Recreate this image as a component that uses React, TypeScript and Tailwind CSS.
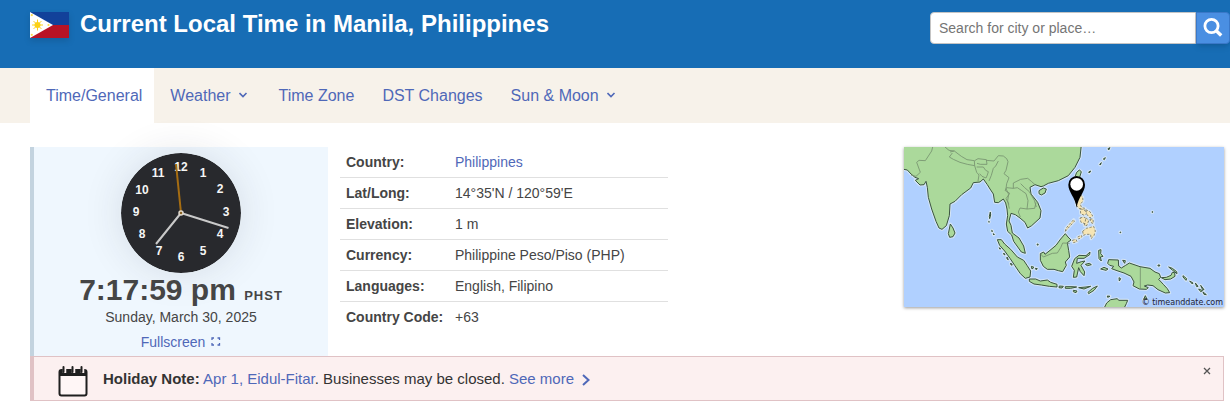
import { ReactNode } from "react";

const tabs = [
    { label: "Time/General", active: true },
    { label: "Weather", menu: true },
    { label: "Time Zone" },
    { label: "DST Changes" },
    { label: "Sun & Moon", menu: true },
];

const facts: { label: string; value: ReactNode }[] = [
    {
        label: "Country:",
        value: (
            <a href="#" className="text-[#4f68b8]">
                Philippines
            </a>
        ),
    },
    { label: "Lat/Long:", value: "14°35'N / 120°59'E" },
    { label: "Elevation:", value: "1 m" },
    { label: "Currency:", value: "Philippine Peso/Piso (PHP)" },
    { label: "Languages:", value: "English, Filipino" },
    { label: "Country Code:", value: "+63" },
];

const numerals = [
    { n: 12, x: 60, y: 18 },
    { n: 1, x: 82, y: 24 },
    { n: 2, x: 99, y: 40 },
    { n: 3, x: 105, y: 63 },
    { n: 4, x: 99, y: 85 },
    { n: 5, x: 82, y: 102 },
    { n: 6, x: 60, y: 108 },
    { n: 7, x: 38, y: 102 },
    { n: 8, x: 21, y: 85 },
    { n: 9, x: 15, y: 63 },
    { n: 10, x: 21, y: 41 },
    { n: 11, x: 37, y: 24 },
];

// Map outlines, drawn on a 960x480 canvas
const land = [
    // mainland Asia
    "M-6 66 10 69 21 81 33 91 44 95 34 100 48 114 60 113 66 103 70 121 73 151 83 186 96 223 105 243 114 247 127 236 136 206 138 171 153 163 173 143 200 123 208 107 228 105 238 96 250 113 258 126 268 141 272 166 283 167 298 156 305 168 309 186 311 206 307 231 311 253 323 264 329 283 352 315 364 319 359 297 345 273 325 258 321 235 315 222 321 199 334 203 348 213 363 226 371 243 383 236 408 213 411 191 401 166 381 141 378 121 393 113 411 119 418 117 433 109 463 101 493 86 513 61 528 31 532 -6 -6 -6Z",
    // Hainan, Taiwan, Sri Lanka
    "M405 131 418 123 427 126 423 138 412 144 405 140Z",
    "M526 69 532 74 527 91 520 101 512 92 518 76Z",
    "M139 231 147 243 153 258 147 269 137 271 133 260Z",
    // Sumatra
    "M280 278 292 278 302 291 320 307 340 330 359 340 369 355 380 372 378 390 364 394 349 380 332 355 318 334 302 312 287 295Z",
    // Java
    "M376 396 395 396 409 402 430 399 440 406 459 412 459 420 436 418 412 414 390 411 376 403Z",
    // Borneo
    "M409 320 419 315 423 322 438 310 456 295 470 276 484 260 492 270 501 279 490 287 494 310 497 330 484 345 487 355 476 374 463 371 450 367 430 367 418 358 409 340Z",
    // Sulawesi
    "M512 335 525 325 546 326 558 315 557 323 540 334 520 334 518 349 532 344 543 342 531 355 542 375 540 386 529 374 524 362 518 390 508 391 511 370 503 358Z",
    // Halmahera, Seram, Timor
    "M584 310 591 308 590 320 597 328 589 330 592 342 585 335Z",
    "M590 366 600 361 612 366 606 370Z",
    "M552 436 566 424 580 417 570 430 554 440Z",
    "M508 430 519 432 516 437 508 434Z",
    "M466 417 478 418 474 423 465 422Z",
    "M484 419 504 419 518 420 500 424 484 424Z",
    "M524 422 546 420 560 418 540 426Z",
    "M544 352 556 349 562 353 550 356Z",
    // New Guinea
    "M614 338 643 339 644 357 652 363 665 355 676 348 708 359 738 364 753 375 766 380 770 391 764 397 778 412 790 425 797 437 784 438 762 428 747 416 731 414 721 417 733 422 727 427 706 426 687 416 690 405 681 388 660 378 639 371 623 365 629 358 617 355 611 349Z",
    // Bismarck islands
    "M772 392 787 391 801 385 805 376 812 377 813 388 800 396 783 398Z",
    "M794 360 805 364 818 374 819 380 806 370Z",
    "M837 386 848 395 846 400 837 390Z",
    "M857 402 867 408 865 411Z",
    "M874 408 882 418 878 419Z",
    "M884 426 896 431 890 434Z",
    "M890 415 900 428 896 428Z",
    "M897 435 907 443 900 442Z",
    // Northern Australia
    "M600 484 608 468 620 458 640 455 644 460 671 460 667 470 660 484Z",
    "M719 457 724 446 729 457Z",
    // small islands
    "M259 195 260 204 257 215 256 208Z",
    "M254 223 256 224 255 226Z",
    "M263 250 266 252 264 254Z",
    "M268 260 271 262 269 264Z",
    "M286 302 290 306 287 306Z",
    "M299 318 303 323 300 323Z",
    "M309 330 313 338 309 336Z",
    "M320 348 325 354 321 354Z",
    "M399 291 403 292 401 295Z",
    "M382 358 390 361 384 366Z",
    "M394 364 400 365 396 368Z",
    "M598 36 604 32 601 38Z",
    "M587 52 592 47 589 54Z",
    "M612 5 618 2 614 9Z",
    "M554 75 560 72 556 78Z",
    "M744 194 746 194 746 196 744 196Z",
    "M648 255 650 255 650 257 648 257Z",
    "M762 354 767 354 767 357 762 357Z",
    "M656 340 664 341 662 349Z",
    "M645 392 650 395 646 402Z",
    "M610 447 618 448 611 451Z",
];

const philippines = [
    "M529 143 536 151 537 162 529 172 533 182 543 184 541 190 524 184 517 174 516 160 521 150Z",
    "M529 185 542 190 549 198 541 205 530 200Z",
    "M545 188 558 194 566 207 558 213 549 203Z",
    "M528 213 540 210 548 217 543 230 531 226Z",
    "M546 212 554 221 549 235 541 236Z",
    "M558 216 567 216 568 230 560 226Z",
    "M536 253 547 244 560 241 569 238 574 252 570 266 561 275 560 262 546 262 538 265Z",
    "M484 253 500 235 512 222 509 218 498 230 486 244Z",
    "M505 280 516 277 519 284 508 287Z",
    "M521 270 532 265 534 270 524 276Z",
];

const borders = [
    "M86 0 83 12 64 41 45 40 38 46 49 76 36 88 21 84",
    "M138 15 151 12 172 28 189 38 211 41 212 56 190 52 168 46 148 37 136 30 145 18",
    "M123 0 135 10 151 12M212 41 222 35 247 38 249 52 229 52 219 49",
    "M212 56 218 76 225 84 222 102M218 60 238 60 245 70 253 74 250 84 246 93 234 88 227 80",
    "M247 40 270 42 283 26 298 27 308 35 312 44 306 70 300 80 315 92M283 42 275 57 268 64 262 85 255 102M315 92 308 110 306 125 314 142 311 161 316 185",
    "M328 124 308 122 303 130 317 139 306 155 315 172",
    "M328 124 328 108 342 101 350 97 371 94 382 103 393 113M350 110 362 122 376 134 391 160 397 180",
    "M328 124 340 122 352 130 366 140 372 161 369 186M369 186 348 183 343 195 349 210M369 186 392 184 396 166",
    "M410 321 418 330 445 319 460 318 470 302 476 288 497 289",
    "M709 360 709 426",
];

function Flag() {
    return (
        <svg viewBox="0 0 39 26" className="w-[39px] h-[26px] shrink-0 drop-shadow-md" role="img" aria-label="Philippines">
            <path d="M0 0H39V13H0Z" fill="#12419a" />
            <path d="M0 13H39V26H0Z" fill="#b81325" />
            <path d="M0 0 23 13 0 26Z" fill="#fff" />
            <path
                d="M7.500 7.500V18.500M2 13H13M3.600 9.100 11.400 16.900M11.400 9.100 3.600 16.900"
                stroke="#fcd116"
                strokeWidth="1"
            />
            <circle cx="7.500" cy="13" r="3" fill="#fcd116" />
            <circle cx="1.800" cy="3.200" r="1.100" fill="#fcdc4d" />
            <circle cx="1.800" cy="22.800" r="1.100" fill="#fcdc4d" />
            <circle cx="18.500" cy="13" r="1.100" fill="#fcdc4d" />
        </svg>
    );
}

function Clock() {
    return (
        <svg
            viewBox="0 0 120 120"
            className="block size-[120px] shrink-0 rounded-full shadow-[0_0_40px_rgba(40,41,60,0.12)]"
            role="img"
            aria-label="Analog clock"
        >
            <circle cx="60" cy="60" r="60" fill="#28292d" />
            {numerals.map(({ n, x, y }) => (
                <text key={n} x={x} y={y} fill="#f5f5f5" fontSize="12" fontWeight="700" textAnchor="middle">
                    {n}
                </text>
            ))}
            <path d="M60 60 35 91M60 60 107.500 75" stroke="#c9c9c9" strokeWidth="2" />
            <path d="M60 60 55 11" stroke="#a66d12" strokeWidth="2" />
            <circle cx="60" cy="60" r="2" fill="#8a6425" stroke="#e0d8cc" strokeWidth="1.500" />
        </svg>
    );
}

function LocatorMap() {
    return (
        <a href="#" className="relative block w-80 h-40 shrink-0 ml-auto shadow-[0_1px_3px_rgba(0,0,0,0.4)]">
            <svg viewBox="0 0 960 480" className="block size-full bg-[#b0d0ff]" role="img" aria-label="Map of Manila">
                <g fill="none" stroke="#d5e5f5" strokeWidth="9" strokeLinejoin="round">
                    {land.concat(philippines).map((d) => (
                        <path key={d} d={d} />
                    ))}
                </g>
                <g fill="#abd99b" stroke="#3a5440" strokeWidth="3" strokeLinejoin="round">
                    {land.map((d) => (
                        <path key={d} d={d} />
                    ))}
                </g>
                <g fill="#f6e5b4" stroke="#5a5a48" strokeWidth="2" strokeDasharray="7 5">
                    {philippines.map((d) => (
                        <path key={d} d={d} />
                    ))}
                </g>
                <g fill="none" stroke="#76926f" strokeWidth="2.500" strokeLinejoin="round">
                    {borders.map((d) => (
                        <path key={d} d={d} />
                    ))}
                </g>
                <path d="M518 182C514 151 493 135 493 113A25 26 0 0 1 543 113C543 135 522 151 518 182Z" fill="#000" />
                <circle cx="518" cy="112" r="19" fill="#fff" />
            </svg>
            <span className="absolute right-px bottom-0 font-['DejaVu_Sans',sans-serif] text-[8px] leading-[9px] text-[#223]">
                © timeanddate.com
            </span>
        </a>
    );
}

function CalendarIcon() {
    return (
        <svg viewBox="0 0 30 31" className="w-[30px] h-[31px] shrink-0" aria-hidden="true">
            <rect x="1.500" y="4" width="27" height="25.500" rx="2" fill="#fff6f6" stroke="#1f1f1f" strokeWidth="2" />
            <path d="M1 4H29V10H1Z" fill="#1f1f1f" />
            <path d="M6.500 1V7M15.500 1V7M24.500 1V7" stroke="#fcf0f0" strokeWidth="3.500" />
            <path d="M5.500 1V6M14.500 1V6M23.500 1V6" stroke="#1f1f1f" strokeWidth="2" strokeLinecap="round" />
        </svg>
    );
}

export default function App() {
    return (
        <div className="font-['Liberation_Sans',Arial,sans-serif] text-sm text-[#454545] bg-white">
            <header className="flex items-start justify-between h-17 pt-3 pl-[30px] bg-[#176db5]">
                <div className="flex">
                    <Flag />
                    <h1 className="ml-[11px] text-2xl leading-6 font-bold text-white">
                        Current Local Time in Manila, Philippines
                    </h1>
                </div>
                <form className="flex h-8" onSubmit={(e) => e.preventDefault()}>
                    <input
                        type="text"
                        aria-label="Search for city or place"
                        placeholder="Search for city or place…"
                        className="w-[266px] px-2 bg-white border border-[#c4c4c4] rounded-l-sm text-sm placeholder:text-[#757575] outline-none"
                    />
                    <button
                        type="submit"
                        aria-label="Search"
                        className="flex items-center justify-center w-[34px] bg-[#4a8fe2] border border-[#3a78c8] rounded-r-sm shadow-md"
                    >
                        <svg viewBox="0 0 20 20" className="size-5" fill="none" stroke="#fff" strokeWidth="2.800">
                            <circle cx="8.500" cy="8" r="6.600" />
                            <path d="M13 12.500 18.200 17.500" strokeWidth="3.400" />
                        </svg>
                    </button>
                </form>
            </header>

            <nav className="flex gap-1 h-[55px] pl-[30px] bg-[#f7f2ea] text-base text-[#4f68b8]">
                {tabs.map((tab) => (
                    <a
                        key={tab.label}
                        href="#"
                        className={tab.active ? "flex items-center pl-4 pr-3 bg-white" : "flex items-center px-3"}
                    >
                        {tab.label}
                        {tab.menu && (
                            <svg viewBox="0 0 12 12" className="size-3 ml-2" fill="none" stroke="#4f68b8" strokeWidth="1.600">
                                <path d="M0.500 3 4 6.500 7.500 3" />
                            </svg>
                        )}
                    </a>
                ))}
            </nav>

            <main className="mt-6 ml-[30px] mr-1.5">
                <div className="flex items-start">
                    <section className="flex flex-col items-center w-[298px] h-[209px] pt-1.5 border-l-4 border-[#c3d3df] bg-[#eff7fe]">
                        <Clock />
                        <p className="text-[30px] leading-[34px] font-bold whitespace-nowrap">
                            7:17:59 pm <span className="text-[13px] leading-none tracking-[1px]">PHST</span>
                        </p>
                        <p className="leading-5">Sunday, March 30, 2025</p>
                        <a href="#" className="flex items-center mt-[5px] leading-5 text-[#4f68b8]">
                            Fullscreen
                            <svg viewBox="0 0 10 10" className="size-2.5 ml-1.5" fill="none" stroke="#4f68b8" strokeWidth="1.300">
                                <path d="M1 3V1H3M6.500 1H8.500V3M8.500 6V8H6.500M3 8H1V6" />
                            </svg>
                        </a>
                    </section>

                    <table className="w-[328px] ml-3 border-separate border-spacing-0 text-left [&_tr>*]:border-b [&_tr>*]:border-[#e0e0e0] [&_tr:last-child>*]:border-transparent">
                        <tbody>
                            {facts.map((fact) => (
                                <tr key={fact.label} className="h-[31px]">
                                    <th scope="row" className="w-[109px] pl-1.5 font-bold whitespace-nowrap">
                                        {fact.label}
                                    </th>
                                    <td className="pl-1.5">{fact.value}</td>
                                </tr>
                            ))}
                        </tbody>
                    </table>

                    <LocatorMap />
                </div>

                <aside className="flex items-end h-[45px] pl-6 pr-3 pb-[3px] border border-l-4 border-[#e0c2c5] bg-[#fcf0f0] text-[15px] text-[#333]">
                    <CalendarIcon />
                    <p className="ml-[15px] self-start leading-[43px]">
                        <b>Holiday Note:</b>{" "}
                        <a href="#" className="text-[#4f68b8]">
                            Apr 1, Eidul-Fitar
                        </a>
                        . Businesses may be closed.{" "}
                        <a href="#" className="text-[#4f68b8]">
                            See more
                            <svg viewBox="0 0 8 12" className="inline w-2 h-3 ml-2" fill="none" stroke="#4f68b8" strokeWidth="2">
                                <path d="M1 1 6.500 6 1 11" />
                            </svg>
                        </a>
                    </p>
                    <button type="button" aria-label="Close" className="self-start ml-auto mt-2.5">
                        <svg viewBox="0 0 8 8" className="size-2" stroke="#555" strokeWidth="1.300">
                            <path d="M1 1 7 7M7 1 1 7" />
                        </svg>
                    </button>
                </aside>
            </main>
        </div>
    );
}
